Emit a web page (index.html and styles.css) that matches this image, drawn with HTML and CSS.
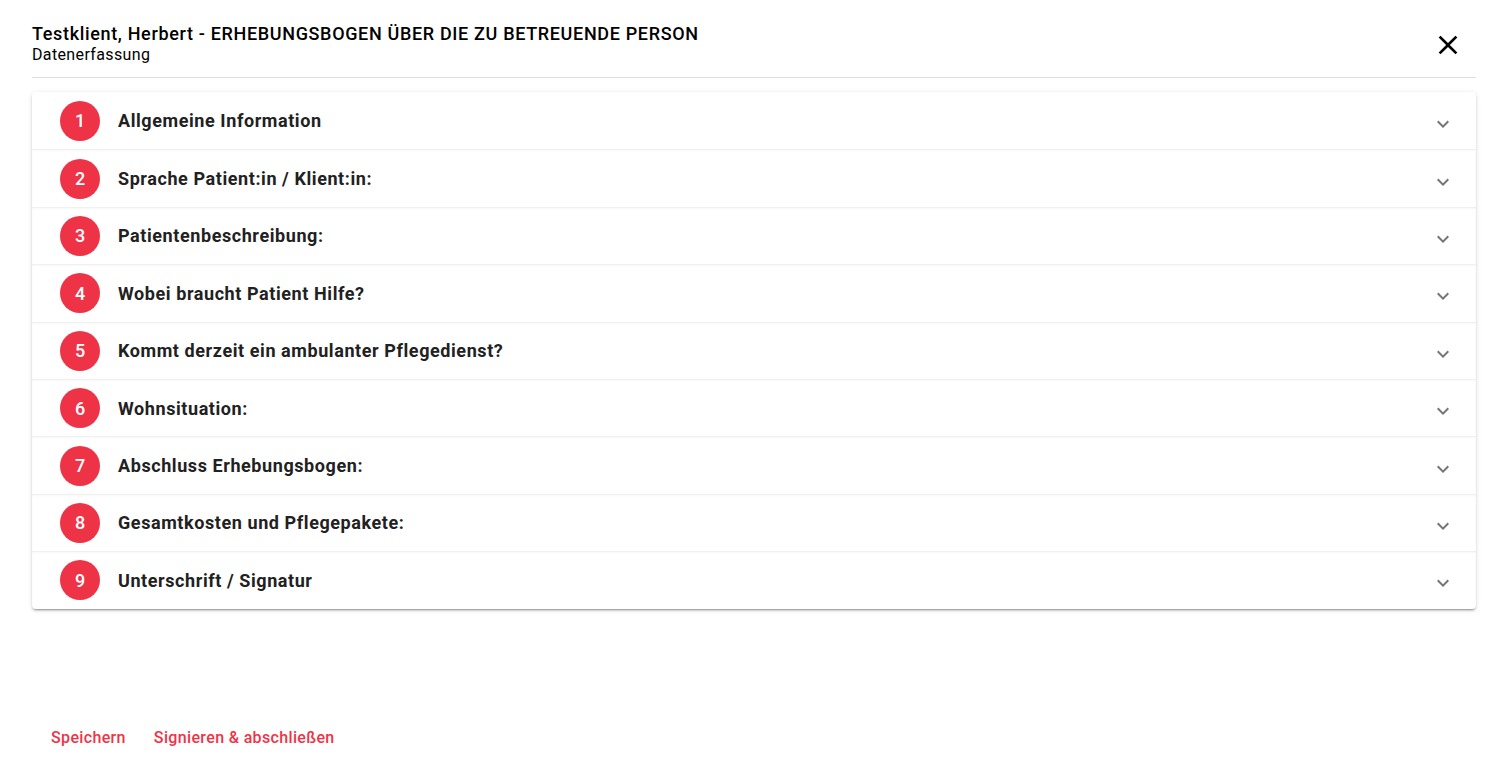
FILE: index.html
```html
<!DOCTYPE html>
<html lang="de">
<head>
    <meta charset="UTF-8">
    <meta name="viewport" content="width=device-width, initial-scale=1.0">
    <title>Erhebungsbogen</title>
    <link rel="stylesheet" href="styles.css">
</head>
<body>
    <div class="dialog">
        <div class="dialog-header">
            <div class="titel">
                <h1>Testklient, Herbert - ERHEBUNGSBOGEN ÜBER DIE ZU BETREUENDE PERSON</h1>
                <div class="untertitel">Datenerfassung</div>
            </div>
            <button class="schliessen" aria-label="Schließen">
                <svg viewBox="0 0 24 24" width="32" height="32"><path d="M19,6.41L17.59,5L12,10.59L6.41,5L5,6.41L10.59,12L5,17.59L6.41,19L12,13.41L17.59,19L19,17.59L13.41,12L19,6.41Z"/></svg>
            </button>
        </div>

        <div class="panels">
            <div class="panel"><span class="nummer">1</span><span class="panel-titel">Allgemeine Information</span><svg class="pfeil" viewBox="0 0 24 24"><path d="M7.41,8.58L12,13.17L16.59,8.58L18,10L12,16L6,10L7.41,8.58Z"/></svg></div>
            <div class="panel"><span class="nummer">2</span><span class="panel-titel">Sprache Patient:in / Klient:in:</span><svg class="pfeil" viewBox="0 0 24 24"><path d="M7.41,8.58L12,13.17L16.59,8.58L18,10L12,16L6,10L7.41,8.58Z"/></svg></div>
            <div class="panel"><span class="nummer">3</span><span class="panel-titel">Patientenbeschreibung:</span><svg class="pfeil" viewBox="0 0 24 24"><path d="M7.41,8.58L12,13.17L16.59,8.58L18,10L12,16L6,10L7.41,8.58Z"/></svg></div>
            <div class="panel"><span class="nummer">4</span><span class="panel-titel">Wobei braucht Patient Hilfe?</span><svg class="pfeil" viewBox="0 0 24 24"><path d="M7.41,8.58L12,13.17L16.59,8.58L18,10L12,16L6,10L7.41,8.58Z"/></svg></div>
            <div class="panel"><span class="nummer">5</span><span class="panel-titel">Kommt derzeit ein ambulanter Pflegedienst?</span><svg class="pfeil" viewBox="0 0 24 24"><path d="M7.41,8.58L12,13.17L16.59,8.58L18,10L12,16L6,10L7.41,8.58Z"/></svg></div>
            <div class="panel"><span class="nummer">6</span><span class="panel-titel">Wohnsituation:</span><svg class="pfeil" viewBox="0 0 24 24"><path d="M7.41,8.58L12,13.17L16.59,8.58L18,10L12,16L6,10L7.41,8.58Z"/></svg></div>
            <div class="panel"><span class="nummer">7</span><span class="panel-titel">Abschluss Erhebungsbogen:</span><svg class="pfeil" viewBox="0 0 24 24"><path d="M7.41,8.58L12,13.17L16.59,8.58L18,10L12,16L6,10L7.41,8.58Z"/></svg></div>
            <div class="panel"><span class="nummer">8</span><span class="panel-titel">Gesamtkosten und Pflegepakete:</span><svg class="pfeil" viewBox="0 0 24 24"><path d="M7.41,8.58L12,13.17L16.59,8.58L18,10L12,16L6,10L7.41,8.58Z"/></svg></div>
            <div class="panel"><span class="nummer">9</span><span class="panel-titel">Unterschrift / Signatur</span><svg class="pfeil" viewBox="0 0 24 24"><path d="M7.41,8.58L12,13.17L16.59,8.58L18,10L12,16L6,10L7.41,8.58Z"/></svg></div>
        </div>

        <div class="aktionen">
            <button class="text-button">Speichern</button>
            <button class="text-button">Signieren &amp; abschließen</button>
        </div>
    </div>
</body>
</html>
```

FILE: styles.css
```css
body {
    margin: 0;
    font-family: Roboto, "Noto Sans", Arial, sans-serif;
    background-color: #fff;
    color: rgba(0, 0, 0, 0.87);
}

.dialog {
    height: 760px;
    padding: 0 31px 0 32px;
    box-sizing: border-box;
    display: flex;
    flex-direction: column;
}

.dialog-header {
    display: flex;
    justify-content: space-between;
    align-items: center;
    padding: 23px 0 12px;
    border-bottom: 1px solid #e0e0e0;
}

.titel h1 {
    margin: 0;
    font-size: 18px;
    font-weight: 500;
    letter-spacing: 0.66px;
    line-height: 22px;
    color: #000;
}

.untertitel {
    font-size: 16px;
    letter-spacing: 0.36px;
    line-height: 20px;
    color: #000;
}

.schliessen {
    border: none;
    background: none;
    padding: 0;
    margin-right: 12px;
    margin-top: 1px;
    cursor: pointer;
    display: flex;
}

.schliessen svg {
    fill: #000;
}

.panels {
    margin-top: 14px;
    border-radius: 4px;
    box-shadow: 0 3px 1px -2px rgba(0, 0, 0, 0.2), 0 2px 2px 0 rgba(0, 0, 0, 0.14), 0 1px 5px 0 rgba(0, 0, 0, 0.12);
    background: white;
}

.panel {
    height: 57.4px;
    box-sizing: border-box;
    display: flex;
    align-items: center;
    padding: 0 21px 0 28px;
}

.panel + .panel {
    border-top: 1px solid #f0f0f0;
    box-shadow: inset 0 1px 2px rgba(0, 0, 0, 0.03);
}

.nummer {
    width: 40px;
    height: 40px;
    border-radius: 50%;
    background-color: #ef3347;
    color: white;
    display: flex;
    align-items: center;
    justify-content: center;
    font-size: 18px;
    font-weight: 500;
    flex-shrink: 0;
}

.panel-titel {
    margin-left: 18px;
    font-size: 18px;
    font-weight: 700;
    letter-spacing: 0.58px;
    color: #212121;
    flex: 1;
}

.pfeil {
    width: 24px;
    height: 24px;
    fill: rgba(0, 0, 0, 0.54);
    margin-top: 6px;
}

.aktionen {
    margin-top: auto;
    display: flex;
    padding: 0 0 5px 5px;
}

.text-button {
    border: none;
    background: none;
    font-family: inherit;
    font-size: 16px;
    font-weight: 500;
    letter-spacing: 0.35px;
    color: #ef3347;
    padding: 8px 14px;
    height: 36px;
    cursor: pointer;
}
```
